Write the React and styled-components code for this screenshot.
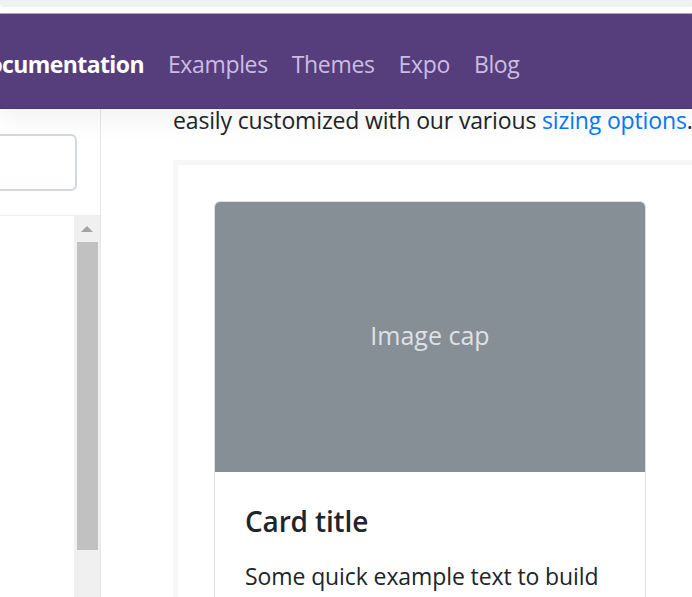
import styled, { createGlobalStyle } from "styled-components";

const GlobalStyle = createGlobalStyle`
  html, body {
    margin: 0;
    padding: 0;
    background: #fff;
    overflow: hidden;
  }
  body {
    font-family: "Open Sans", "Noto Sans", sans-serif;
    color: #212529;
  }
  * {
    box-sizing: border-box;
  }
`;

const Page = styled.div`
  width: 692px;
  height: 597px;
  display: flex;
  flex-direction: column;
  overflow: hidden;
`;

const BrowserBar = styled.div`
  height: 14px;
  flex-shrink: 0;
  background: #fff;
  border-bottom: 1px solid #a9ada9;
`;

const AddressStrip = styled.div`
  height: 7px;
  background: #f0f1f3;
  border-bottom-left-radius: 4px;
`;

const Navbar = styled.nav`
  height: 95px;
  flex-shrink: 0;
  background: #563d7c;
  display: flex;
  align-items: center;
  position: relative;
  z-index: 2;
  box-shadow: 0 12px 24px rgba(0, 0, 0, 0.05), inset 0 -1px 0 rgba(0, 0, 0, 0.1);
`;

const NavList = styled.div`
  display: flex;
  align-items: center;
  gap: 24px;
  margin-left: -28px;
  padding-top: 4px;
`;

const NavLink = styled.a`
  font-size: 23px;
  color: ${(p) => (p.$active ? "#fff" : "#cbbde2")};
  font-weight: ${(p) => (p.$active ? 700 : 400)};
  letter-spacing: ${(p) => (p.$active ? "-0.6px" : "-0.35px")};
  white-space: nowrap;
`;

const Body = styled.div`
  flex: 1;
  display: flex;
  min-height: 0;
`;

const Sidebar = styled.aside`
  width: 101px;
  flex-shrink: 0;
  border-right: 1px solid #e6e6e6;
  display: flex;
  flex-direction: column;
`;

const SearchArea = styled.div`
  height: 107px;
  flex-shrink: 0;
  padding-top: 25px;
  border-bottom: 1px solid #eeeeee;
`;

const SearchInput = styled.div`
  width: 100px;
  height: 57px;
  margin-left: -23px;
  border: 2px solid #d3d8dd;
  border-radius: 6px;
  background: #fff;
`;

const ListArea = styled.div`
  flex: 1;
  display: flex;
  justify-content: flex-end;
`;

const Scrollbar = styled.div`
  width: 26px;
  background: #f0f0f0;
  display: flex;
  flex-direction: column;
  align-items: center;
  padding-top: 10px;
`;

const ArrowUp = styled.div`
  width: 0;
  height: 0;
  border-left: 6px solid transparent;
  border-right: 6px solid transparent;
  border-bottom: 6px solid #a3a3a3;
`;

const Thumb = styled.div`
  width: 21px;
  height: 308px;
  margin-top: 10px;
  background: #c1c1c1;
`;

const Main = styled.main`
  flex: 1;
  padding-left: 72px;
  overflow: hidden;
`;

const Lead = styled.p`
  margin: -7px 0 0;
  font-size: 23px;
  line-height: 36px;
  letter-spacing: -0.15px;
  white-space: nowrap;
`;

const Link = styled.a`
  color: #007bff;
`;

const Example = styled.div`
  margin-top: 22px;
  width: 600px;
  padding: 36px;
  border: 5px solid #f7f7f9;
`;

const Card = styled.div`
  width: 432px;
  border: 1px solid rgba(0, 0, 0, 0.125);
  border-radius: 6px;
  overflow: hidden;
  background: #fff;
`;

const ImageCap = styled.div`
  height: 270px;
  background: #868e96;
  color: #dee2e6;
  display: flex;
  align-items: center;
  justify-content: center;
  font-size: 25px;
  padding-bottom: 4px;
  letter-spacing: 0;
`;

const CardBody = styled.div`
  padding: 30px;
`;

const CardTitle = styled.h5`
  margin: 0 0 18px;
  font-size: 28px;
  font-weight: 600;
  line-height: 36px;
  letter-spacing: -0.15px;
  padding-top: 1px;
`;

const CardText = styled.p`
  margin: 0;
  font-size: 23px;
  line-height: 36px;
  letter-spacing: -0.1px;
  padding-top: 1px;
`;

export default function App() {
  return (
    <>
      <GlobalStyle />
      <Page>
        <BrowserBar>
          <AddressStrip />
        </BrowserBar>
        <Navbar>
          <NavList>
            <NavLink $active>Documentation</NavLink>
            <NavLink>Examples</NavLink>
            <NavLink>Themes</NavLink>
            <NavLink>Expo</NavLink>
            <NavLink>Blog</NavLink>
          </NavList>
        </Navbar>
        <Body>
          <Sidebar>
            <SearchArea>
              <SearchInput />
            </SearchArea>
            <ListArea>
              <Scrollbar>
                <ArrowUp />
                <Thumb />
              </Scrollbar>
            </ListArea>
          </Sidebar>
          <Main>
            <Lead>
              easily customized with our various <Link>sizing options</Link>.
            </Lead>
            <Example>
              <Card>
                <ImageCap>Image cap</ImageCap>
                <CardBody>
                  <CardTitle>Card title</CardTitle>
                  <CardText>Some quick example text to build</CardText>
                </CardBody>
              </Card>
            </Example>
          </Main>
        </Body>
      </Page>
    </>
  );
}
